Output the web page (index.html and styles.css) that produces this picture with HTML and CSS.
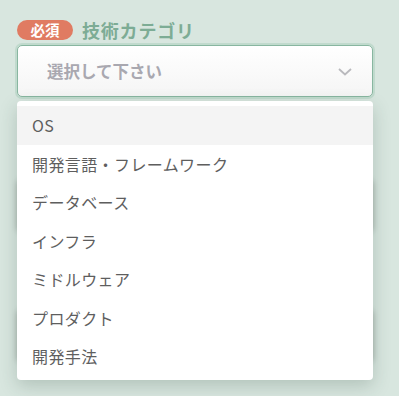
FILE: index.html
```html
<!DOCTYPE html>
<html lang="ja">
<head>
<meta charset="utf-8">
<link rel="stylesheet" href="styles.css">
</head>
<body>
<div class="form">
  <div class="field">
    <div class="label-row">
      <span class="badge">必須</span>
      <span class="label">技術カテゴリ</span>
    </div>
    <div class="select-wrap">
      <div class="select">
        <span class="placeholder">選択して下さい</span>
        <svg class="chevron" width="14" height="8" viewBox="0 0 14 8"><path d="M1 1 L7 6.5 L13 1" fill="none" stroke="#b9b9bd" stroke-width="1.8"/></svg>
      </div>
      <ul class="menu">
        <li class="item active">OS</li>
        <li class="item">開発言語・フレームワーク</li>
        <li class="item">データベース</li>
        <li class="item">インフラ</li>
        <li class="item">ミドルウェア</li>
        <li class="item">プロダクト</li>
        <li class="item">開発手法</li>
      </ul>
    </div>
  </div>
  <div class="ghost ghost-1"></div>
  <div class="ghost ghost-2"></div>
</div>
</body>
</html>
```
FILE: styles.css
```css
html, body {
  margin: 0;
  padding: 0;
  background: #d8e6df;
  font-family: "Noto Sans CJK JP", "Noto Sans", sans-serif;
}
body {
  min-height: 396px;
}
.form {
  padding: 19px 26px 40px 17px;
  display: flex;
  flex-direction: column;
}
.label-row {
  display: flex;
  align-items: center;
  gap: 9px;
  height: 22px;
}
.badge {
  background: #e07b62;
  color: #fff;
  font-size: 14.5px;
  font-weight: 700;
  width: 56px;
  height: 20px;
  border-radius: 10px;
  display: flex;
  align-items: center;
  justify-content: center;
  line-height: 1;
}
.label {
  color: #7dac95;
  font-size: 18px;
  font-weight: 700;
  line-height: 1;
  letter-spacing: 0.8px;
}
.select-wrap {
  position: relative;
  margin-top: 4px;
}
.select {
  height: 50px;
  border: 1px solid #88b6a0;
  border-radius: 5px;
  background: linear-gradient(#ffffff, #f5f5f5);
  box-shadow: 0 0 0 2px rgba(150, 195, 172, 0.35);
  display: flex;
  align-items: center;
  justify-content: space-between;
  padding: 0 20px 0 29px;
}
.placeholder {
  color: #a9a8b0;
  font-size: 16.5px;
  font-weight: 700;
}
.chevron {
  margin-top: 1px;
}
.menu {
  position: absolute;
  left: 0;
  right: 0;
  top: 56px;
  margin: 0;
  padding: 5px 0 4.5px;
  list-style: none;
  background: #fff;
  border-radius: 4px;
  box-shadow: 0 6px 18px rgba(40, 70, 55, 0.22);
  z-index: 2;
}
.item {
  height: 38.5px;
  display: flex;
  align-items: center;
  padding-left: 15px;
  font-size: 16px;
  letter-spacing: 0.4px;
  color: #5e5e5e;
}
.item.active {
  background: #f4f4f4;
}
.ghost {
  height: 52px;
  border-radius: 5px;
  background: #fff;
  box-shadow: 0 0 6px rgba(0, 0, 0, 0.25);
}
.ghost-1 {
  margin-top: 83px;
}
.ghost-2 {
  margin-top: 78px;
}
```
